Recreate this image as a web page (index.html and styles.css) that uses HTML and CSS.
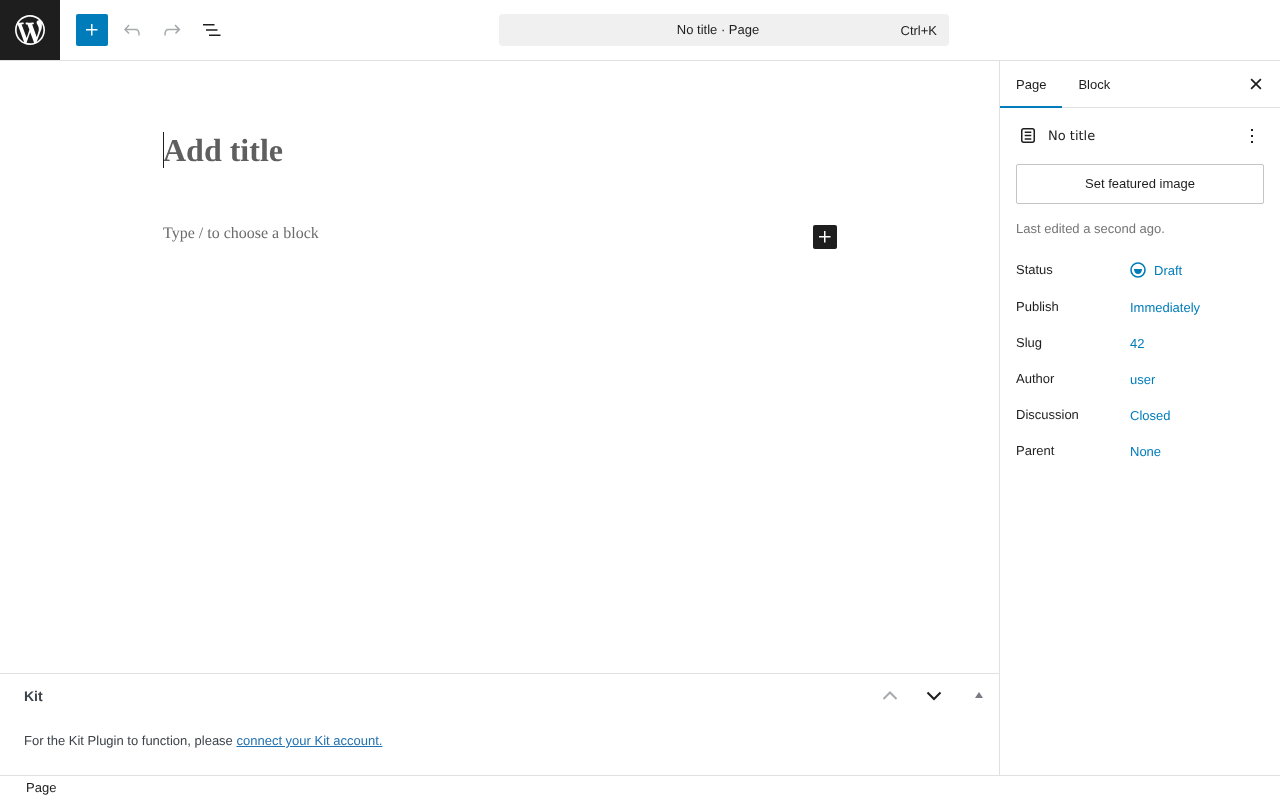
FILE: index.html
```html
<!DOCTYPE html>
<html lang="en">
<head>
<meta charset="utf-8">
<title>Edit Page</title>
<link rel="stylesheet" href="styles.css">
</head>
<body>
<div class="app">
  <header class="topbar">
    <a class="logo" href="#" aria-label="WordPress">
      <svg width="36" height="36" viewBox="-2 -2 24 24" fill="#fff"><path d="M20 10c0-5.510-4.490-10-10-10C4.480 0 0 4.490 0 10c0 5.520 4.480 10 10 10 5.510 0 10-4.480 10-10zM7.780 15.370L4.370 6.220c.55-.02 1.170-.08 1.170-.08.5-.06.44-1.130-.06-1.110 0 0-1.450.11-2.370.11-.18 0-.37 0-.58-.01C4.120 2.690 6.870 1.110 10 1.110c2.330 0 4.450.87 6.050 2.340-.68-.11-1.650.39-1.650 1.580 0 .74.45 1.360.9 2.100.35.61.55 1.360.55 2.460 0 1.490-1.400 5-1.400 5l-3.030-8.370c.54-.02.82-.08.82-.08.5-.06.44-1.130-.06-1.100 0 0-1.440.12-2.380.12-.87 0-2.330-.12-2.330-.12-.5-.03-.56 1.200-.06 1.220l.92.080 1.260 3.410zM17.410 10c.24-.64.74-1.870.43-4.250.7 1.290 1.050 2.710 1.050 4.250 0 3.290-1.730 6.240-4.400 7.780.97-2.590 1.940-5.200 2.920-7.780zM6.100 18.090C3.120 16.650 1.110 13.530 1.110 10c0-1.300.23-2.480.72-3.590C3.250 10.300 4.670 14.200 6.100 18.090zm4.030-6.630l2.580 6.980c-.84.28-1.740.45-2.710.45-.79 0-1.570-.11-2.290-.33.81-2.370 1.620-4.730 2.420-7.100z"/></svg>
    </a>
    <div class="tools">
      <button class="inserter" aria-label="Add block">
        <svg width="24" height="24" viewBox="0 0 24 24" fill="#fff"><path d="M11 12.500V17.500H12.500V12.500H17.500V11H12.500V6H11V11H6V12.500H11Z"/></svg>
      </button>
      <button class="tool" aria-label="Undo">
        <svg width="24" height="24" viewBox="0 0 24 24" fill="#a7aaad"><path d="M18.300 11.700c-.6-.6-1.400-.9-2.300-.9H6.700l2.900-3.300-1.100-1-4.500 5L8.500 16l1-1-2.700-2.700H16c.5 0 .9.200 1.300.5 1 1 1 3.400 1 4.500v.3h1.500v-.2c0-1.500 0-4.300-1.500-5.700z"/></svg>
      </button>
      <button class="tool" aria-label="Redo">
        <svg width="24" height="24" viewBox="0 0 24 24" fill="#a7aaad"><path d="M15.600 6.500l-1.100 1 2.900 3.300H8c-.9 0-1.700.3-2.300.9-1.400 1.500-1.400 4.200-1.400 5.600v.2h1.500v-.3c0-1.100 0-3.500 1-4.500.3-.3.700-.5 1.300-.5h9.200L15 15l1 1 4.500-4.500-4.900-5z"/></svg>
      </button>
      <button class="tool" aria-label="Document overview">
        <svg width="24" height="24" viewBox="0 0 24 24" fill="#1e1e1e"><path d="M3 6h11.500v1.500H3zM6 11.250h11.500v1.500H6zM9 16.500h11.500V18H9z"/></svg>
      </button>
    </div>
    <div class="command">
      <span class="command-title">No title · Page</span>
      <span class="command-key">Ctrl+K</span>
    </div>
  </header>

  <div class="workspace">
    <main class="editor">
      <div class="canvas">
        <div class="title-wrap">
          <span class="caret"></span>
          <h1 class="title">Add title</h1>
        </div>
        <div class="block-row">
          <p class="placeholder">Type / to choose a block</p>
          <button class="block-add" aria-label="Add block">
            <svg width="24" height="24" viewBox="0 0 24 24" fill="#fff"><path d="M11 12.500V17.500H12.500V12.500H17.500V11H12.500V6H11V11H6V12.500H11Z"/></svg>
          </button>
        </div>
      </div>
      <section class="metabox">
        <div class="metabox-head">
          <h2 class="metabox-title">Kit</h2>
          <div class="metabox-controls">
            <button class="meta-btn" aria-label="Move up">
              <svg width="20" height="20" viewBox="0 0 20 20" fill="none" stroke="#a7aaad" stroke-width="2"><path d="M3.500 13 10 6.500l6.500 6.500"/></svg>
            </button>
            <button class="meta-btn" aria-label="Move down">
              <svg width="20" height="20" viewBox="0 0 20 20" fill="none" stroke="#1e1e1e" stroke-width="2"><path d="M3.500 6.500 10 13l6.500-6.500"/></svg>
            </button>
            <button class="meta-btn" aria-label="Collapse">
              <svg class="meta-tri" width="10" height="8" viewBox="0 0 10 8" fill="#787c82"><path d="M5 1l4 6H1z"/></svg>
            </button>
          </div>
        </div>
        <p class="metabox-text">For the Kit Plugin to function, please <a href="#">connect your Kit account.</a></p>
      </section>
    </main>

    <aside class="sidebar">
      <div class="tabs">
        <button class="tab tab-active">Page</button>
        <button class="tab">Block</button>
        <button class="close" aria-label="Close">
          <svg width="24" height="24" viewBox="0 0 24 24" fill="#1e1e1e"><path d="M12 13.060l3.712 3.713 1.061-1.060L13.061 12l3.712-3.712-1.060-1.060L12 10.938 8.288 7.227l-1.061 1.060L10.939 12l-3.712 3.712 1.060 1.061L12 13.061z" transform="translate(12 12) scale(1.15) translate(-12 -12)"/></svg>
        </button>
      </div>
      <div class="panel">
        <div class="doc-head">
          <svg class="doc-icon" width="24" height="24" viewBox="0 0 24 24" fill="none" stroke="#1e1e1e" stroke-width="1.500"><rect x="5.750" y="4.750" width="12.500" height="13.500" rx="2"/><path d="M8.700 8.300h6.600M8.700 11.600h6.600M8.700 14.900h6.600"/></svg>
          <span class="doc-name">No title</span>
          <button class="more" aria-label="Actions">
            <svg width="24" height="24" viewBox="0 0 24 24" fill="#1e1e1e"><path d="M13 19h-2v-2h2v2zm0-6h-2v-2h2v2zm0-6h-2V5h2v2z"/></svg>
          </button>
        </div>
        <button class="featured">Set featured image</button>
        <p class="edited">Last edited a second ago.</p>
        <dl class="rows">
          <div class="row row-status">
            <dt>Status</dt>
            <dd><svg class="status-icon" width="16" height="16" viewBox="0 0 16 16"><circle cx="8" cy="8" r="7" fill="none" stroke="#007cba" stroke-width="1.600"/><path d="M4 7h8c0 3-1.800 5-4 5S4 10 4 7z" fill="#007cba"/></svg><a class="status-link" href="#">Draft</a></dd>
          </div>
          <div class="row"><dt>Publish</dt><dd><a href="#">Immediately</a></dd></div>
          <div class="row"><dt>Slug</dt><dd><a href="#">42</a></dd></div>
          <div class="row"><dt>Author</dt><dd><a href="#">user</a></dd></div>
          <div class="row"><dt>Discussion</dt><dd><a href="#">Closed</a></dd></div>
          <div class="row"><dt>Parent</dt><dd><a href="#">None</a></dd></div>
        </dl>
      </div>
    </aside>
  </div>

  <footer class="statusbar">Page</footer>
</div>
</body>
</html>
```

FILE: styles.css
```css
* { box-sizing: border-box; }
html, body { margin: 0; height: 100%; overflow: hidden; }
body { background: #fff; color: #1e1e1e; font: 13px/1.4 "Liberation Sans", Arial, sans-serif; text-rendering: geometricPrecision; }
button { font: inherit; color: inherit; background: none; border: 0; padding: 0; cursor: pointer; }
a { text-decoration: none; color: #007cba; }
svg { display: block; }
.app { display: flex; flex-direction: column; width: 1280px; height: 800px; will-change: transform; }

.topbar { flex: none; height: 61px; display: flex; align-items: center; border-bottom: 1px solid #e0e0e0; position: relative; }
.logo { width: 60px; height: 60px; background: #1e1e1e; display: flex; align-items: center; justify-content: center; align-self: flex-start; }
.tools { display: flex; align-items: center; margin-left: 16px; gap: 8px; }
.inserter { width: 32px; height: 32px; background: #007cba; border-radius: 2px; display: flex; align-items: center; justify-content: center; }
.tool { width: 32px; height: 32px; display: flex; align-items: center; justify-content: center; }
.command { position: absolute; left: 499px; top: 14px; width: 450px; height: 32px; background: #f0f0f0; border-radius: 4px; display: flex; align-items: center; justify-content: center; }
.command-title { margin-right: 12px; }
.command-key { position: absolute; right: 12px; top: 8px; }

.workspace { flex: 1; display: flex; min-height: 0; }
.editor { flex: 1; display: flex; flex-direction: column; min-width: 0; }
.canvas { flex: 1; padding: 71px 162px 0 163px; font-family: "Liberation Serif", "Times New Roman", serif; }
.title-wrap { position: relative; }
.caret { position: absolute; left: 0; top: 0; width: 1px; height: 36px; background: #1e1e1e; }
.title { margin: 0; font-size: 32px; line-height: 36px; font-weight: 700; color: #5f5f5f; }
.block-row { display: flex; justify-content: space-between; align-items: flex-start; margin-top: 52px; }
.placeholder { margin: 0; font-size: 16px; line-height: 27px; color: #6b6b6b; }
.block-add { width: 24px; height: 24px; margin-top: 5px; background: #1e1e1e; border-radius: 2px; }

.metabox { flex: none; height: 102px; border-top: 1px solid #e0e0e0; }
.metabox-head { height: 44px; display: flex; align-items: center; justify-content: space-between; padding-left: 24px; }
.metabox-title { margin: 0; font-size: 14px; font-weight: 700; line-height: 44px; color: #3c434a; }
.metabox-controls { display: flex; margin-right: -1px; }
.meta-btn { width: 44px; height: 44px; display: flex; align-items: center; justify-content: center; }
.meta-tri { margin: 0 0 2px 2px; }
.metabox-text { margin: 13px 0 0; padding-left: 24px; color: #3c434a; line-height: 19px; }
.metabox-text a { color: #2271b1; text-decoration: underline; }

.sidebar { flex: none; width: 281px; border-left: 1px solid #e0e0e0; position: relative; z-index: 1; background: #fff; }
.tabs { height: 47px; display: flex; align-items: stretch; border-bottom: 1px solid #e0e0e0; position: relative; }
.tab { padding: 2px 16px 0; height: 47px; }
.tab-active { box-shadow: inset 0 -2px 0 #007cba; }
.close { margin-left: auto; margin-right: 12px; width: 24px; display: flex; align-items: center; justify-content: center; }
.panel { padding: 16px; }
.doc-head { display: flex; align-items: center; height: 24px; }
.doc-icon { margin-right: 8px; }
.doc-name { font-family: "DejaVu Sans", sans-serif; color: #1e1e1e; margin-top: 2px; }
.more { margin-left: auto; width: 24px; height: 24px; }
.featured { display: block; width: 248px; height: 40px; margin-top: 16px; border: 1px solid #c3c4c7; border-radius: 2px; color: #1e1e1e; }
.edited { margin: 16px 0 0; color: #757575; line-height: 18px; }
.rows { margin: 23px 0 0; }
.row { display: flex; height: 36px; }
.row dt { width: 114px; line-height: 18px; }
.row dd { margin: 0; padding-top: 1px; line-height: 18px; }
.row-status { height: 37px; }
.row-status dd { display: flex; align-items: center; gap: 8px; height: 20px; padding-top: 0; margin-top: -1px; }
.status-link { margin-top: 2px; }

.statusbar { flex: none; height: 25px; border-top: 1px solid #e0e0e0; padding-left: 26px; line-height: 23px; }
```
